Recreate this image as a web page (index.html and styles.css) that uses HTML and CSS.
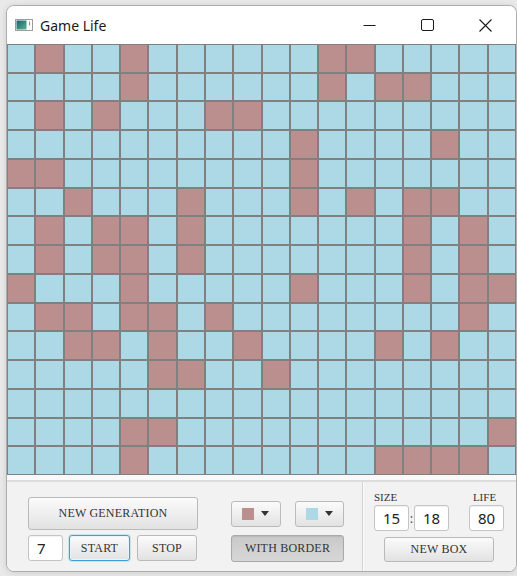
FILE: index.html
```html
<!DOCTYPE html>
<html>
<head>
<meta charset="utf-8">
<title>Game Life</title>
<link rel="stylesheet" href="styles.css">
</head>
<body>
<div class="window">
  <div class="titlebar">
    <svg class="app-icon" width="18" height="12" viewBox="0 0 18 12">
      <defs>
        <linearGradient id="ig" x1="0" y1="0" x2="1" y2="1">
          <stop offset="0" stop-color="#1f5f6e"/>
          <stop offset="1" stop-color="#55b58f"/>
        </linearGradient>
      </defs>
      <rect x="0.5" y="0.5" width="17" height="11" fill="#fdfdfd" stroke="#9c9c9c"/>
      <rect x="1.5" y="1.5" width="10" height="9" fill="url(#ig)"/>
      <rect x="14" y="2.5" width="1" height="4" fill="#8c8c8c"/>
    </svg>
    <span class="title">Game Life</span>
    <div class="caption">
      <span class="cap-btn"><svg width="13" height="12" viewBox="0 0 13 12"><path d="M0.5 6.5H12.5" stroke="#1a1a1a" stroke-width="1"/></svg></span>
      <span class="cap-btn"><svg width="13" height="12" viewBox="0 0 13 12"><rect x="0.5" y="0.5" width="12" height="11" rx="1.5" fill="none" stroke="#1a1a1a" stroke-width="1"/></svg></span>
      <span class="cap-btn"><svg width="13" height="13" viewBox="0 0 13 13"><path d="M0.5 0.5L12.5 12.5M12.5 0.5L0.5 12.5" stroke="#1a1a1a" stroke-width="1.1"/></svg></span>
    </div>
  </div>

  <div class="board">
    <!-- row 0 -->
    <span class="cell"></span><span class="cell live"></span><span class="cell"></span><span class="cell"></span><span class="cell live"></span><span class="cell"></span><span class="cell"></span><span class="cell"></span><span class="cell"></span><span class="cell"></span><span class="cell"></span><span class="cell live"></span><span class="cell live"></span><span class="cell"></span><span class="cell"></span><span class="cell"></span><span class="cell"></span><span class="cell"></span>
    <!-- row 1 -->
    <span class="cell"></span><span class="cell"></span><span class="cell"></span><span class="cell"></span><span class="cell live"></span><span class="cell"></span><span class="cell"></span><span class="cell"></span><span class="cell"></span><span class="cell"></span><span class="cell"></span><span class="cell live"></span><span class="cell"></span><span class="cell live"></span><span class="cell live"></span><span class="cell"></span><span class="cell"></span><span class="cell"></span>
    <!-- row 2 -->
    <span class="cell"></span><span class="cell live"></span><span class="cell"></span><span class="cell live"></span><span class="cell"></span><span class="cell"></span><span class="cell"></span><span class="cell live"></span><span class="cell live"></span><span class="cell"></span><span class="cell"></span><span class="cell"></span><span class="cell"></span><span class="cell"></span><span class="cell"></span><span class="cell"></span><span class="cell"></span><span class="cell"></span>
    <!-- row 3 -->
    <span class="cell"></span><span class="cell"></span><span class="cell"></span><span class="cell"></span><span class="cell"></span><span class="cell"></span><span class="cell"></span><span class="cell"></span><span class="cell"></span><span class="cell"></span><span class="cell live"></span><span class="cell"></span><span class="cell"></span><span class="cell"></span><span class="cell"></span><span class="cell live"></span><span class="cell"></span><span class="cell"></span>
    <!-- row 4 -->
    <span class="cell live"></span><span class="cell live"></span><span class="cell"></span><span class="cell"></span><span class="cell"></span><span class="cell"></span><span class="cell"></span><span class="cell"></span><span class="cell"></span><span class="cell"></span><span class="cell live"></span><span class="cell"></span><span class="cell"></span><span class="cell"></span><span class="cell"></span><span class="cell"></span><span class="cell"></span><span class="cell"></span>
    <!-- row 5 -->
    <span class="cell"></span><span class="cell"></span><span class="cell live"></span><span class="cell"></span><span class="cell"></span><span class="cell"></span><span class="cell live"></span><span class="cell"></span><span class="cell"></span><span class="cell"></span><span class="cell live"></span><span class="cell"></span><span class="cell live"></span><span class="cell"></span><span class="cell live"></span><span class="cell live"></span><span class="cell"></span><span class="cell"></span>
    <!-- row 6 -->
    <span class="cell"></span><span class="cell live"></span><span class="cell"></span><span class="cell live"></span><span class="cell live"></span><span class="cell"></span><span class="cell live"></span><span class="cell"></span><span class="cell"></span><span class="cell"></span><span class="cell"></span><span class="cell"></span><span class="cell"></span><span class="cell"></span><span class="cell live"></span><span class="cell"></span><span class="cell live"></span><span class="cell"></span>
    <!-- row 7 -->
    <span class="cell"></span><span class="cell live"></span><span class="cell"></span><span class="cell live"></span><span class="cell live"></span><span class="cell"></span><span class="cell live"></span><span class="cell"></span><span class="cell"></span><span class="cell"></span><span class="cell"></span><span class="cell"></span><span class="cell"></span><span class="cell"></span><span class="cell live"></span><span class="cell"></span><span class="cell live"></span><span class="cell"></span>
    <!-- row 8 -->
    <span class="cell live"></span><span class="cell"></span><span class="cell"></span><span class="cell"></span><span class="cell live"></span><span class="cell"></span><span class="cell"></span><span class="cell"></span><span class="cell"></span><span class="cell"></span><span class="cell live"></span><span class="cell"></span><span class="cell"></span><span class="cell"></span><span class="cell live"></span><span class="cell"></span><span class="cell live"></span><span class="cell live"></span>
    <!-- row 9 -->
    <span class="cell"></span><span class="cell live"></span><span class="cell live"></span><span class="cell"></span><span class="cell live"></span><span class="cell live"></span><span class="cell"></span><span class="cell live"></span><span class="cell"></span><span class="cell"></span><span class="cell"></span><span class="cell"></span><span class="cell"></span><span class="cell"></span><span class="cell"></span><span class="cell"></span><span class="cell live"></span><span class="cell"></span>
    <!-- row 10 -->
    <span class="cell"></span><span class="cell"></span><span class="cell live"></span><span class="cell live"></span><span class="cell"></span><span class="cell live"></span><span class="cell"></span><span class="cell"></span><span class="cell live"></span><span class="cell"></span><span class="cell"></span><span class="cell"></span><span class="cell"></span><span class="cell live"></span><span class="cell"></span><span class="cell live"></span><span class="cell"></span><span class="cell"></span>
    <!-- row 11 -->
    <span class="cell"></span><span class="cell"></span><span class="cell"></span><span class="cell"></span><span class="cell"></span><span class="cell live"></span><span class="cell live"></span><span class="cell"></span><span class="cell"></span><span class="cell live"></span><span class="cell"></span><span class="cell"></span><span class="cell"></span><span class="cell"></span><span class="cell"></span><span class="cell"></span><span class="cell"></span><span class="cell"></span>
    <!-- row 12 -->
    <span class="cell"></span><span class="cell"></span><span class="cell"></span><span class="cell"></span><span class="cell"></span><span class="cell"></span><span class="cell"></span><span class="cell"></span><span class="cell"></span><span class="cell"></span><span class="cell"></span><span class="cell"></span><span class="cell"></span><span class="cell"></span><span class="cell"></span><span class="cell"></span><span class="cell"></span><span class="cell"></span>
    <!-- row 13 -->
    <span class="cell"></span><span class="cell"></span><span class="cell"></span><span class="cell"></span><span class="cell live"></span><span class="cell live"></span><span class="cell"></span><span class="cell"></span><span class="cell"></span><span class="cell"></span><span class="cell"></span><span class="cell"></span><span class="cell"></span><span class="cell"></span><span class="cell"></span><span class="cell"></span><span class="cell"></span><span class="cell live"></span>
    <!-- row 14 -->
    <span class="cell"></span><span class="cell"></span><span class="cell"></span><span class="cell"></span><span class="cell live"></span><span class="cell"></span><span class="cell"></span><span class="cell"></span><span class="cell"></span><span class="cell"></span><span class="cell"></span><span class="cell"></span><span class="cell"></span><span class="cell live"></span><span class="cell live"></span><span class="cell live"></span><span class="cell live"></span><span class="cell"></span>
  </div>

  <div class="divider"></div>

  <div class="panel">
    <div class="controls">
      <button class="btn gen">NEW GENERATION</button>
      <div class="pickers">
        <button class="btn picker"><span class="swatch swatch-live"></span><span class="arrow"></span></button>
        <button class="btn picker"><span class="swatch swatch-dead"></span><span class="arrow"></span></button>
      </div>
      <div class="run-row">
        <div class="field steps">7</div>
        <button class="btn run focused">START</button>
        <button class="btn run">STOP</button>
      </div>
      <button class="btn toggle selected">WITH BORDER</button>
    </div>
    <div class="box-settings">
      <div class="labels"><span class="lbl size-lbl">SIZE</span><span class="lbl life-lbl">LIFE</span></div>
      <div class="fields">
        <div class="field">15</div><span class="colon">:</span><div class="field">18</div><span></span><div class="field">80</div>
      </div>
      <button class="btn newbox">NEW BOX</button>
    </div>
  </div>
</div>
</body>
</html>
```

FILE: styles.css
```css
* { box-sizing: border-box; }
html, body { margin: 0; padding: 0; }
body {
  width: 517px;
  height: 576px;
  overflow: hidden;
  background: #e9e9e9;
  font-family: "Noto Sans", "Open Sans", sans-serif;
}

.window {
  margin: 5px 0 0 6px;
  width: 511px;
  height: 567px;
  background: #f2f2f2;
  border: 1px solid #adadad;
  border-radius: 8px;
  overflow: hidden;
  display: flex;
  flex-direction: column;
  box-shadow: 0 1px 6px rgba(0,0,0,0.12);
}

/* title bar */
.titlebar {
  height: 38px;
  flex: none;
  background: #ffffff;
  display: flex;
  align-items: center;
}
.app-icon { margin-left: 8px; flex: none; }
.title {
  margin-left: 7px;
  font-size: 14px;
  color: #1a1a1a;
}
.caption { margin-left: auto; margin-right: 2px; display: flex; }
.cap-btn {
  width: 58px;
  height: 38px;
  display: flex;
  align-items: center;
  justify-content: center;
}

/* board */
.board {
  flex: none;
  width: 509px;
  height: 431px;
  display: grid;
  grid-template-columns: repeat(18, 1fr);
  grid-template-rows: repeat(15, 1fr);
  background: #808080;
}
.cell {
  border: 1px solid #808080;
  background: #add8e6;
}
.cell.live { background: #bc8f8f; }

.divider {
  flex: none;
  height: 7px;
  background: #f9f9f9;
  border-bottom: 2px solid #dcdcdc;
}

/* panel */
.panel {
  flex: 1;
  display: flex;
  background: #f2f2f2;
}
.controls {
  width: 356px;
  padding: 15px 0 0 21px;
  border-right: 1px solid #d2d2d2;
  display: grid;
  grid-template-columns: 170px 113px;
  grid-template-rows: 33px 26px;
  column-gap: 33px;
  row-gap: 5px;
  align-content: start;
}

.btn {
  margin: 0;
  padding: 0;
  border: 1px solid #bababa;
  border-radius: 3px;
  background: linear-gradient(#fbfbfb, #e2e2e2);
  font-family: "Liberation Serif", "Times New Roman", serif;
  font-size: 12px;
  color: #333333;
  letter-spacing: 0.2px;
  display: flex;
  align-items: center;
  justify-content: center;
}
.btn.focused {
  border-color: #3d9fd8;
  box-shadow: 0 0 0 1px rgba(3,158,211,0.18), inset 0 0 0 1px #e9f4fb;
}
.btn.selected {
  border-color: #a9a9a9;
  background: linear-gradient(#c9c9c9, #d7d7d7);
  box-shadow: inset 0 1px 1px rgba(0,0,0,0.08);
}

.pickers {
  display: flex;
  justify-content: space-between;
  align-items: center;
}
.picker {
  width: 50px;
  height: 26px;
  justify-content: flex-start;
  padding-left: 10px;
  gap: 7px;
}
.picker + .picker { width: 49px; }
.swatch { width: 12px; height: 12px; display: block; }
.swatch-live { background: #bc8f8f; }
.swatch-dead { background: #add8e6; }
.arrow {
  width: 0;
  height: 0;
  border-left: 4px solid transparent;
  border-right: 4px solid transparent;
  border-top: 5px solid #333333;
}

.run-row {
  display: flex;
  gap: 6px;
}
.run { width: 61px; }
.run + .run { width: 60px; margin-left: 1px; }
.steps { width: 36px; }

.toggle { height: 27px; }

.field {
  height: 26px;
  width: 35px;
  background: #ffffff;
  border: 1px solid #c4c4c4;
  border-radius: 3px;
  box-shadow: inset 0 1px 1px rgba(0,0,0,0.06);
  font-size: 15px;
  color: #222222;
  padding-left: 8px;
  display: flex;
  align-items: center;
}

.box-settings {
  flex: 1;
  border-left: 1px solid #fbfbfb;
  padding: 8px 0 0 10px;
}
.labels {
  display: grid;
  grid-template-columns: 95px 35px;
  height: 14px;
  margin-bottom: 1px;
}
.lbl {
  font-family: "Liberation Serif", "Times New Roman", serif;
  font-size: 11px;
  line-height: 14px;
  color: #333333;
}
.life-lbl { text-align: center; padding-right: 4px; }
.fields {
  display: grid;
  grid-template-columns: 35px 5px 35px 20px 35px;
  align-items: center;
}
.colon {
  font-size: 13px;
  color: #555555;
  text-align: center;
  line-height: 26px;
}
.newbox {
  margin: 6px 0 0 10px;
  width: 110px;
  height: 25px;
}
```
